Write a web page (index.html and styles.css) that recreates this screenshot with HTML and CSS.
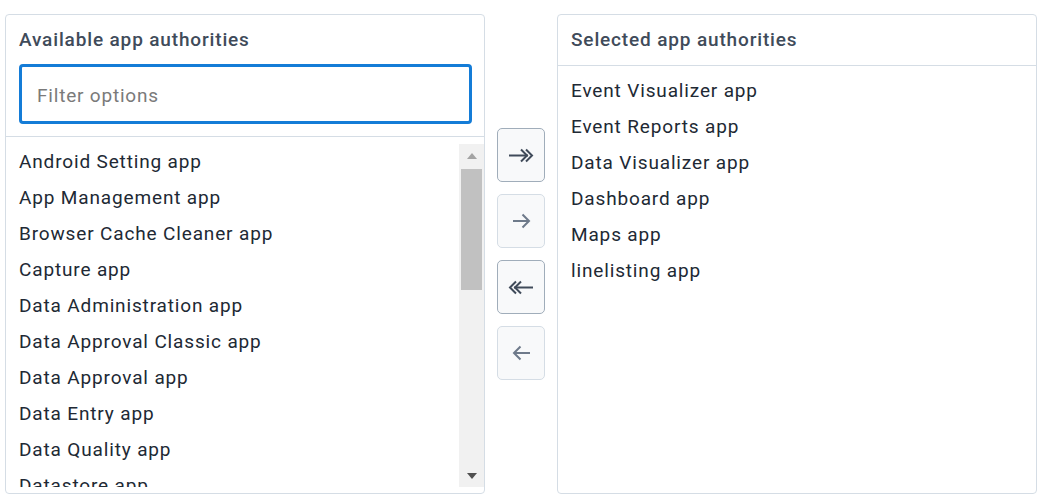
FILE: index.html
```html
<!DOCTYPE html>
<html>
<head>
<meta charset="utf-8">
<link rel="stylesheet" href="styles.css">
</head>
<body>
<div class="transfer">
  <section class="panel">
    <div class="panel-head panel-head-left">
      <div class="title">Available app authorities</div>
      <div class="filter"><input class="filter-input" type="text" placeholder="Filter options"></div>
    </div>
    <div class="list-wrap">
      <ul class="list">
        <li>Android Setting app</li>
        <li>App Management app</li>
        <li>Browser Cache Cleaner app</li>
        <li>Capture app</li>
        <li>Data Administration app</li>
        <li>Data Approval Classic app</li>
        <li>Data Approval app</li>
        <li>Data Entry app</li>
        <li>Data Quality app</li>
        <li>Datastore app</li>
        <li>Import/Export app</li>
      </ul>
      <div class="scrollbar">
        <div class="sb-btn"><span class="tri tri-up"></span></div>
        <div class="sb-track"><div class="sb-thumb"></div></div>
        <div class="sb-btn"><span class="tri tri-down"></span></div>
      </div>
    </div>
  </section>

  <div class="actions">
    <button class="act act-on" type="button" aria-label="Add all">
      <svg width="26" height="15" viewBox="0 0 26 15" fill="none" stroke="currentColor" stroke-width="2"><path d="M1 7.5H20"/><path d="M13 1.5l6 6-6 6"/><path d="M18 1.5l6 6-6 6"/></svg>
    </button>
    <button class="act act-off" type="button" aria-label="Add">
      <svg width="19" height="16" viewBox="0 0 19 16" fill="none" stroke="currentColor" stroke-width="2"><path d="M1 8H17"/><path d="M10.5 1.5l6.5 6.5-6.5 6.5"/></svg>
    </button>
    <button class="act act-on" type="button" aria-label="Remove all">
      <svg width="26" height="15" viewBox="0 0 26 15" fill="none" stroke="currentColor" stroke-width="2"><path d="M25 7.5H6"/><path d="M13 1.5l-6 6 6 6"/><path d="M8 1.5l-6 6 6 6"/></svg>
    </button>
    <button class="act act-off" type="button" aria-label="Remove">
      <svg width="19" height="16" viewBox="0 0 19 16" fill="none" stroke="currentColor" stroke-width="2"><path d="M18 8H2"/><path d="M8.5 1.5L2 8l6.5 6.5"/></svg>
    </button>
  </div>

  <section class="panel">
    <div class="panel-head">
      <div class="title">Selected app authorities</div>
    </div>
    <div class="list-wrap">
      <ul class="list">
        <li>Event Visualizer app</li>
        <li>Event Reports app</li>
        <li>Data Visualizer app</li>
        <li>Dashboard app</li>
        <li>Maps app</li>
        <li>linelisting app</li>
      </ul>
    </div>
  </section>
</div>
</body>
</html>
```

FILE: styles.css
```css
html, body {
  margin: 0;
  padding: 0;
  background: #ffffff;
}

body {
  font-family: Roboto, "Noto Sans", "Liberation Sans", sans-serif;
  color: #212934;
}

.transfer {
  display: flex;
  align-items: stretch;
  padding: 14px 0 0 5px;
}

.panel {
  box-sizing: border-box;
  width: 480px;
  height: 480px;
  border: 1px solid #d5dde5;
  border-radius: 4px;
  display: flex;
  flex-direction: column;
  overflow: hidden;
}

.panel-head {
  padding: 12px 12px 12px 13px;
  border-bottom: 1px solid #d5dde5;
}

.title {
  font-size: 19px;
  letter-spacing: 0.85px;
  line-height: 26px;
  font-weight: 500;
  color: #404b5a;
}

.filter {
  margin-top: 11px;
}

.filter-input {
  box-sizing: border-box;
  display: block;
  width: 453px;
  height: 60px;
  border: 3px solid #147cd7;
  border-radius: 4px;
  padding: 3px 15px 0 15px;
  font-family: inherit;
  font-size: 19px;
  letter-spacing: 0.8px;
  color: #212934;
  outline: none;
  background: #fff;
}

.filter-input::placeholder {
  color: #7a7a7a;
}

.list-wrap {
  flex: 1;
  min-height: 0;
  display: flex;
  padding: 7px 0 6px 0;
}

.list {
  flex: 1;
  margin: 0;
  padding: 0;
  list-style: none;
  overflow: hidden;
}

.list li {
  height: 36px;
  line-height: 36px;
  padding-left: 13px;
  font-size: 19px;
  letter-spacing: 0.85px;
  color: #212934;
  white-space: nowrap;
}

.scrollbar {
  width: 25px;
  background: #f1f1f1;
  display: flex;
  flex-direction: column;
}

.sb-btn {
  height: 23px;
  display: flex;
  align-items: center;
  justify-content: center;
}

.sb-track {
  flex: 1;
  padding: 2px 2px 0 2px;
}

.sb-thumb {
  height: 121px;
  background: #c1c1c1;
}

.tri {
  width: 0;
  height: 0;
  border-left: 5.5px solid transparent;
  border-right: 5.5px solid transparent;
}

.tri-up {
  border-bottom: 6px solid #a3a3a3;
}

.tri-down {
  border-top: 6px solid #505050;
}

.actions {
  width: 48px;
  margin: 0 12px;
  display: flex;
  flex-direction: column;
  justify-content: center;
  gap: 12px;
}

.act {
  box-sizing: border-box;
  width: 48px;
  height: 54px;
  padding: 0;
  border-radius: 5px;
  background: #f8f9fa;
  display: flex;
  align-items: center;
  justify-content: center;
  cursor: pointer;
}

.act-on {
  border: 1px solid #a0adba;
  color: #404b5a;
}

.act-off {
  border: 1px solid #d5dde5;
  color: #6e7a8a;
}
```
